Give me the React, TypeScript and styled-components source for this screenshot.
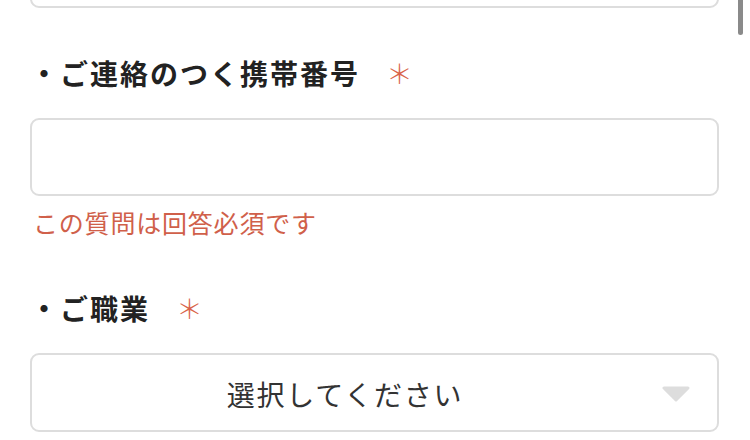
import styled, { createGlobalStyle } from 'styled-components'

const GlobalStyle = createGlobalStyle`
   html, body {
      margin: 0;
      padding: 0;
      background: #fff;
      overflow: hidden;
   }
   body {
      font-family: 'Noto Sans CJK JP', 'Noto Sans', sans-serif;
      color: #222;
   }
`

const Page = styled.div`
   width: 750px;
   height: 440px;
   overflow: hidden;
   position: relative;
`

const Form = styled.form`
   display: flex;
   flex-direction: column;
   padding: 0 31px 0 30px;
`

const TextBox = styled.div<{ $prev?: boolean }>`
   height: 78px;
   box-sizing: border-box;
   border: 2px solid #dddddd;
   border-radius: 9px;
   background: #fff;
   margin-top: ${(p) => (p.$prev ? '-70px' : '0')};
`

const Field = styled.div`
   display: flex;
   flex-direction: column;
   margin-top: 45px;
`

const Label = styled.div`
   display: flex;
   align-items: center;
   font-size: 28px;
   line-height: 40px;
   font-weight: 700;
   letter-spacing: 2px;
   color: #222;
   margin-bottom: 25px;
`

const Required = styled.span`
   margin-left: 26px;
   font-size: 27px;
   font-weight: 300;
   color: #d9634a;
   letter-spacing: 0;
`

const ErrorText = styled.div`
   font-size: 25px;
   line-height: 36px;
   letter-spacing: 0.8px;
   color: #d0604a;
   margin: 8px 0 3px 3px;
`

const Select = styled.div`
   height: 79px;
   box-sizing: border-box;
   border: 2px solid #dddddd;
   border-radius: 9px;
   display: flex;
   align-items: center;
   padding-right: 27px;
`

const SelectText = styled.span`
   flex: 1;
   text-align: center;
   font-size: 28px;
   letter-spacing: 1.8px;
   color: #333;
   margin-right: 4px;
   margin-top: 2px;
`

const Arrow = styled.svg`
   width: 28px;
   height: 16px;
   margin-top: 3px;
`

const ScrollThumb = styled.div`
   position: absolute;
   top: -10px;
   right: 7px;
   width: 5px;
   height: 45px;
   border-radius: 3px;
   background: #8a8a8a;
`

export default function App() {
   return (
      <Page>
         <GlobalStyle />
         <Form>
            <TextBox $prev />

            <Field>
               <Label>
                  ・ご連絡のつく携帯番号
                  <Required>＊</Required>
               </Label>
               <TextBox />
               <ErrorText>この質問は回答必須です</ErrorText>
            </Field>

            <Field>
               <Label>
                  ・ご職業
                  <Required>＊</Required>
               </Label>
               <Select>
                  <SelectText>選択してください</SelectText>
                  <Arrow viewBox='0 0 28 16'>
                     <polygon
                        points='2,2 26,2 14,14'
                        fill='#dddddd'
                        stroke='#dddddd'
                        strokeWidth='3'
                        strokeLinejoin='round'
                     />
                  </Arrow>
               </Select>
            </Field>
         </Form>
         <ScrollThumb />
      </Page>
   )
}
